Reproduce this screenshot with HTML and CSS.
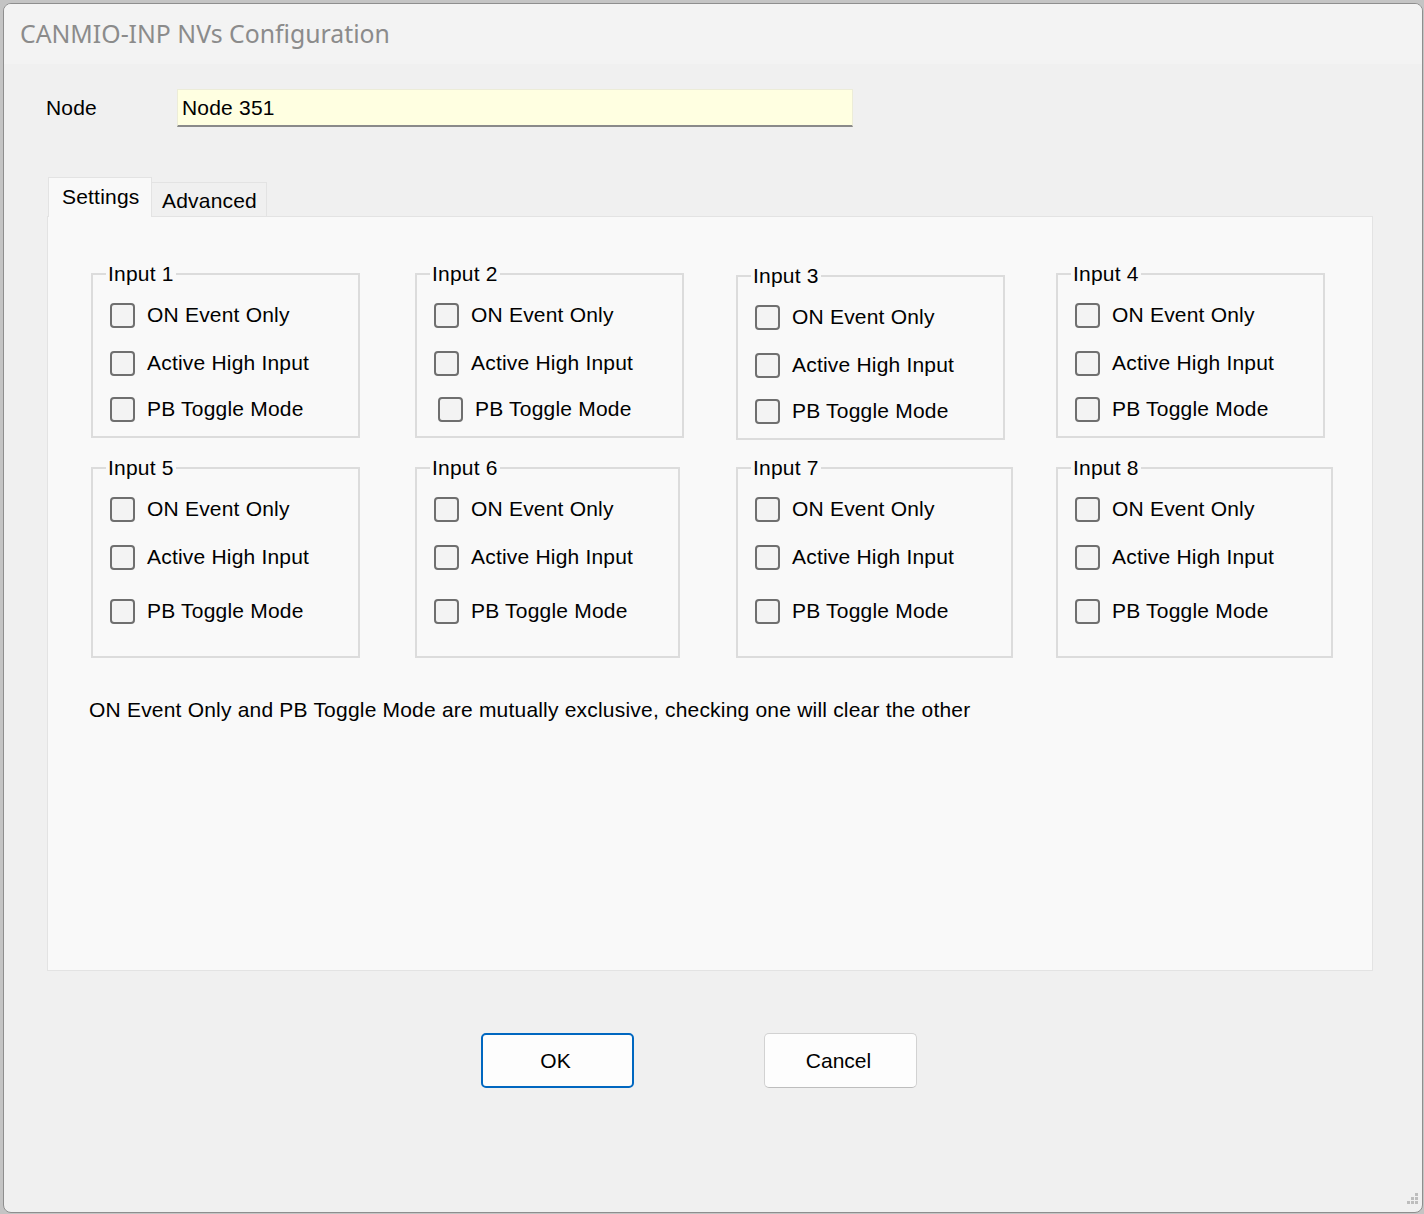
FILE: index.html
```html
<!DOCTYPE html>
<html>
<head>
<meta charset="utf-8">
<title>CANMIO-INP NVs Configuration</title>
<link rel="stylesheet" href="styles.css">
</head>
<body>
<div class="window">
  <div class="titlebar">CANMIO-INP NVs Configuration</div>
  <div class="content">
    <div class="node-row">
      <span class="node-label">Node</span>
      <div class="textbox">Node 351</div>
    </div>

    <div class="tabs">
      <div class="tab tab-active">Settings</div>
      <div class="tab tab-inactive">Advanced</div>
    </div>

    <div class="panel">
      <div class="groups">
        <div class="group g-row1 w269">
          <div class="group-title">Input 1</div>
          <div class="cb-row first"><span class="cb"></span>ON Event Only</div>
          <div class="cb-row r1-2"><span class="cb"></span>Active High Input</div>
          <div class="cb-row r1-3"><span class="cb"></span>PB Toggle Mode</div>
        </div>
        <div class="group g-row1 w269">
          <div class="group-title">Input 2</div>
          <div class="cb-row first"><span class="cb"></span>ON Event Only</div>
          <div class="cb-row r1-2"><span class="cb"></span>Active High Input</div>
          <div class="cb-row r1-3 shift4"><span class="cb"></span>PB Toggle Mode</div>
        </div>
        <div class="group g-row1 w269 down2">
          <div class="group-title">Input 3</div>
          <div class="cb-row first"><span class="cb"></span>ON Event Only</div>
          <div class="cb-row r1-2"><span class="cb"></span>Active High Input</div>
          <div class="cb-row r1-3"><span class="cb"></span>PB Toggle Mode</div>
        </div>
        <div class="group g-row1 w269">
          <div class="group-title">Input 4</div>
          <div class="cb-row first"><span class="cb"></span>ON Event Only</div>
          <div class="cb-row r1-2"><span class="cb"></span>Active High Input</div>
          <div class="cb-row r1-3"><span class="cb"></span>PB Toggle Mode</div>
        </div>

        <div class="group g-row2 w269">
          <div class="group-title">Input 5</div>
          <div class="cb-row first"><span class="cb"></span>ON Event Only</div>
          <div class="cb-row r2-2"><span class="cb"></span>Active High Input</div>
          <div class="cb-row r2-3"><span class="cb"></span>PB Toggle Mode</div>
        </div>
        <div class="group g-row2 w265">
          <div class="group-title">Input 6</div>
          <div class="cb-row first"><span class="cb"></span>ON Event Only</div>
          <div class="cb-row r2-2"><span class="cb"></span>Active High Input</div>
          <div class="cb-row r2-3"><span class="cb"></span>PB Toggle Mode</div>
        </div>
        <div class="group g-row2 w277">
          <div class="group-title">Input 7</div>
          <div class="cb-row first"><span class="cb"></span>ON Event Only</div>
          <div class="cb-row r2-2"><span class="cb"></span>Active High Input</div>
          <div class="cb-row r2-3"><span class="cb"></span>PB Toggle Mode</div>
        </div>
        <div class="group g-row2 w277">
          <div class="group-title">Input 8</div>
          <div class="cb-row first"><span class="cb"></span>ON Event Only</div>
          <div class="cb-row r2-2"><span class="cb"></span>Active High Input</div>
          <div class="cb-row r2-3"><span class="cb"></span>PB Toggle Mode</div>
        </div>
      </div>
      <p class="note">ON Event Only and PB Toggle Mode are mutually exclusive, checking one will clear the other</p>
    </div>

    <div class="buttons">
      <button class="btn btn-default">OK</button>
      <button class="btn">Cancel</button>
    </div>
  </div>
  <svg class="grip" width="16" height="16" viewBox="0 0 16 16">
    <rect x="11" y="0" width="3" height="3" fill="#bdbdbd"/>
    <rect x="7" y="4" width="3" height="3" fill="#bdbdbd"/>
    <rect x="11" y="4" width="3" height="3" fill="#bdbdbd"/>
    <rect x="3" y="8" width="3" height="3" fill="#bdbdbd"/>
    <rect x="7" y="8" width="3" height="3" fill="#bdbdbd"/>
    <rect x="11" y="8" width="3" height="3" fill="#bdbdbd"/>
  </svg>
</div>
</body>
</html>
```

FILE: styles.css
```css
html, body {
  margin: 0;
  padding: 0;
}
body {
  background: #c4c4c4;
  width: 1424px;
  height: 1214px;
  overflow: hidden;
  font-family: "Liberation Sans", Arial, sans-serif;
  font-size: 21px;
  letter-spacing: 0.2px;
  color: #000;
}
.window {
  position: relative;
  box-sizing: border-box;
  margin: 3px 0 0 3px;
  width: 1420px;
  height: 1210px;
  border: 1px solid #8e8e8e;
  border-radius: 8px;
  background: #f0f0f0;
  overflow: hidden;
}
.titlebar {
  height: 60px;
  background: #f3f3f3;
  padding-left: 16px;
  font-family: "Noto Sans", "Open Sans", sans-serif;
  font-size: 24.8px;
  letter-spacing: 0;
  line-height: 58px;
  color: #8b8b8b;
}
.content {
  padding-top: 25px;
}
.node-row {
  display: flex;
  align-items: center;
  padding-left: 42px;
  height: 38px;
}
.node-label {
  width: 131px;
}
.textbox {
  box-sizing: border-box;
  width: 676px;
  height: 38px;
  background: #ffffe1;
  border: 1px solid #ececd8;
  border-bottom: 2px solid #8a8a8a;
  padding-left: 4px;
  line-height: 36px;
}
.tabs {
  display: flex;
  align-items: flex-end;
  margin-top: 50px;
  padding-left: 44px;
  height: 40px;
  position: relative;
  z-index: 1;
}
.tab {
  box-sizing: border-box;
  line-height: 34px;
}
.tab-active {
  width: 104px;
  height: 40px;
  padding-left: 13px;
  line-height: 38px;
  background: #f9f9f9;
  border: 1px solid #e3e3e3;
  border-bottom: none;
}
.tab-inactive {
  width: 115px;
  height: 35px;
  padding-left: 10px;
  background: #f0f0f0;
  border: 1px solid #e3e3e3;
  border-left: none;
  border-bottom: 1px solid #e3e3e3;
  line-height: 36px;
}
.panel {
  box-sizing: border-box;
  margin-left: 43px;
  margin-top: -1px;
  width: 1326px;
  height: 755px;
  background: #f9f9f9;
  border: 1px solid #e3e3e3;
  padding: 56px 0 0 43px;
}
.groups {
  display: grid;
  grid-template-columns: 324px 321px 320px auto;
  row-gap: 29px;
  align-items: start;
  justify-items: start;
}
.group {
  box-sizing: border-box;
  border: 2px solid #dcdcdc;
  padding-left: 17px;
}
.g-row1 { height: 165px; }
.g-row2 { height: 191px; }
.w269 { width: 269px; }
.w265 { width: 265px; }
.w277 { width: 277px; }
.down2 { margin-top: 2px; margin-bottom: -2px; }
.group-title {
  width: fit-content;
  margin: -13px 0 0 -4px;
  padding: 0 2px;
  background: #f9f9f9;
  line-height: 24px;
  height: 24px;
}
.cb-row {
  display: flex;
  align-items: center;
  height: 30px;
  white-space: nowrap;
}
.cb-row.first { margin-top: 14px; }
.r1-2 { margin-top: 18px; }
.r1-3 { margin-top: 16px; }
.r2-2 { margin-top: 18px; }
.r2-3 { margin-top: 24px; }
.shift4 { padding-left: 4px; }
.cb {
  box-sizing: border-box;
  width: 25px;
  height: 25px;
  border: 2px solid #6f6f6f;
  border-radius: 4px;
  background: #f3f3f3;
  margin-right: 12px;
  flex: none;
}
.note {
  margin: 40px 0 0 -2px;
  line-height: 24px;
}
.buttons {
  display: flex;
  gap: 130px;
  padding-left: 477px;
  margin-top: 62px;
}
.btn {
  box-sizing: border-box;
  width: 153px;
  height: 55px;
  font-family: "Liberation Sans", Arial, sans-serif;
  font-size: 21px;
  color: #000;
  background: #fdfdfd;
  border: 1px solid #d2d2d2;
  border-bottom-color: #bdbdbd;
  border-radius: 5px;
  padding: 0 4px 0 0;
}
.btn-default {
  border: 2px solid #0067c0;
}
.grip {
  position: absolute;
  right: 2px;
  bottom: 3px;
}
```
